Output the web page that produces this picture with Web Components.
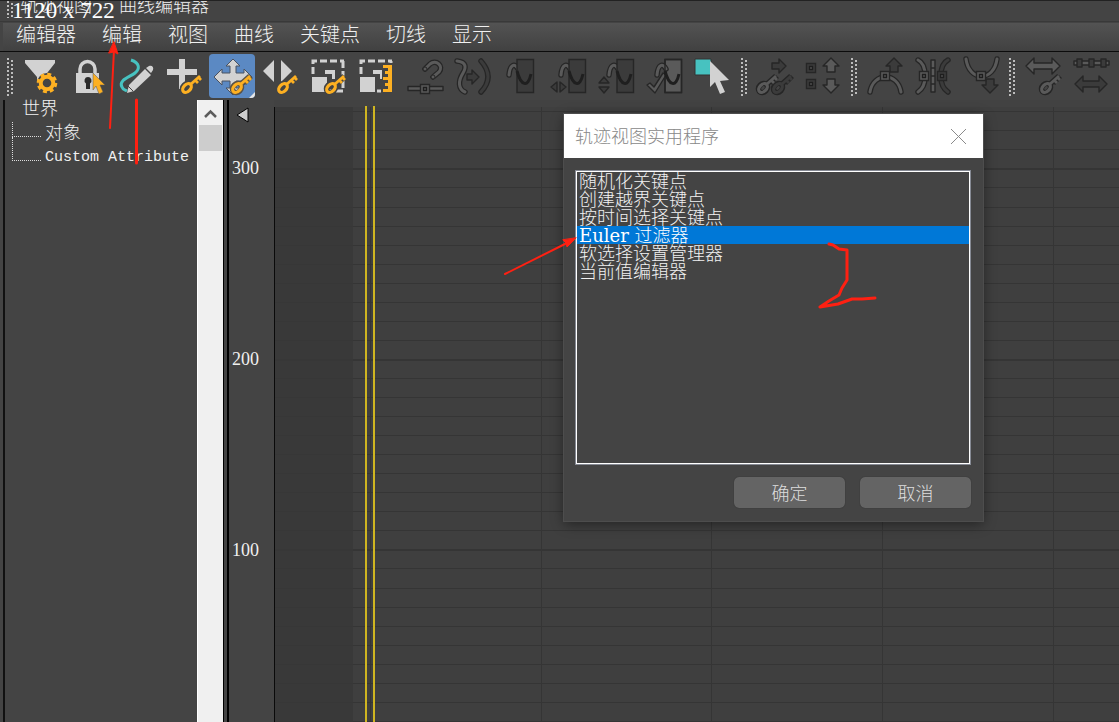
<!DOCTYPE html>
<html lang="zh-CN">
<head>
<meta charset="utf-8">
<title>轨迹视图 - 曲线编辑器</title>
<style>
    html, body {
        margin: 0;
        height: 100%;
        overflow: hidden;
        background: #444;
    }
</style>
</head>
<body>
<curve-editor></curve-editor>

<script>
const FONT = '"Liberation Mono", "Noto Sans CJK SC", monospace';

// Colours shared by the toolbar icons
const LIGHT = '#d2d2d2';
const ORANGE = '#fdb022';
const TEAL = '#47c2c0';
const EDGE = '#262626';
const GREY = '#5a5a5a';
const DARK = '#3b3b3b';

/* ---------- Icon pieces, all in a 48x48 box ---------- */

const key = (x, y, fill, edge) => `
    <g transform="translate(${x} ${y})" fill="none" stroke-linejoin="round">
        <g stroke="${edge}">
            <ellipse rx="5" ry="4" transform="rotate(-45)" stroke-width="5.5"/>
            <path d="M4-4L13-12M8-8l3 3M11-11l3 3" stroke-width="5.5"/>
        </g>
        <g stroke="${fill}">
            <ellipse rx="5" ry="3.5" transform="rotate(-45)" stroke-width="3.2"/>
            <path d="M4-4L13-12M8-8l3 3M11-11l3 3" stroke-width="2.8"/>
        </g>
    </g>`;

const tube = (d, fill = GREY) => `
    <path d="${d}" fill="none" stroke="${EDGE}" stroke-width="5.5" stroke-linecap="round"/>
    <path d="${d}" fill="none" stroke="${fill}" stroke-width="3" stroke-linecap="round"/>`;

const shape = (d, fill = GREY) =>
    `<path d="${d}" fill="${fill}" stroke="${EDGE}" stroke-width="1.4" stroke-linejoin="round"/>`;

const knot = (x, y, fill = GREY) => `
    <path d="M${x - 4.5} ${y - 4.5}h9v9h-9z" fill="${fill}" stroke="${EDGE}" stroke-width="1.4"/>
    <path d="M${x - 1.5} ${y - 1.5}h3v3h-3z" fill="${GREY}" stroke="#1e1e1e" stroke-width="1.4"/>`;

const arrowUp = (x, y, fill) => shape(`M${x} ${y - 7}l8 8h-4v6h-8v-6h-4z`, fill);
const arrowDown = (x, y, fill) => shape(`M${x} ${y + 7}l8-8h-4v-6h-8v6h-4z`, fill);

const wave = (x, fill = DARK) => `
    ${tube(`M${x - 8} 23C${x - 7} 12 ${x - 2} 11 ${x + 1} 17`)}
    <path d="M${x} 7.5h16.5v33H${x}z" fill="${fill}" stroke="${EDGE}" stroke-width="1.4"/>
    <path d="M${x} 19C${x + 4} 34 ${x + 11} 36 ${x + 14} 22" fill="none" stroke="#1f1f1f" stroke-width="3"/>`;

const scaleBox = `
    <g fill="none" stroke="${LIGHT}" stroke-width="3">
        <path d="M8 22V9h31" stroke-dasharray="7 3"/>
        <path d="M38 9v30H24" stroke-dasharray="7 3"/>
    </g>
    <path d="M7 25h15v15H7z" fill="${LIGHT}"/>
    <path d="M20 18h10v9h-3v-5h-7z" fill="${LIGHT}"/>`;

const ICONS = {
    filter: `
        <path d="M8 8h30v3L27 25v7h-7v-7L8 11z" fill="${LIGHT}"/>
        <circle cx="30" cy="31" r="10" fill="#444"/>
        <circle cx="30" cy="31" r="6.3" fill="none" stroke="${ORANGE}" stroke-width="4"/>
        <circle cx="30" cy="31" r="8.8" fill="none" stroke="${ORANGE}" stroke-width="3" stroke-dasharray="3.9 3.01"/>`,
    lock: `
        <path d="M15 22v-5a7.500 7.500 0 0 1 15 0v5" fill="none" stroke="${LIGHT}" stroke-width="3.500"/>
        <path d="M11 21h23v20H11z" fill="${LIGHT}"/>
        <path d="M23 25a3.500 3.500 0 0 1 2 6.400V37h-4v-5.600A3.500 3.500 0 0 1 23 25z" fill="#2b2b2b"/>
        <path d="M28 21l12 12h-5l3 7-4 2-3-8-3 4z" fill="${ORANGE}" stroke="#555" stroke-width=".5"/>`,
    pencil: `
        <path d="M18 8c9 3 9 9 4 13S5 28 9 35c1 3 3 3 5 4" fill="none" stroke="${TEAL}" stroke-width="3"/>
        <path d="M14 41l2-8 16-16 6 6-17 16zM33 16l3-2c3-1 5 1 4 4l-2 3z" fill="${LIGHT}"/>
        <path d="M15 34l5 5" stroke="#444" stroke-width="1"/>`,
    addKey: `
        <path d="M18 7h6v10h12v6H24v14h-6V23H6v-6h12z" fill="${LIGHT}"/>
        ${key(26, 36, ORANGE, '#444')}`,
    move: `
        <path d="M24 7l7 7h-4v7h8v-4l8 8-8 8v-4h-8v7h4l-7 7-7-7h4v-7h-8v4l-8-8 8-8v4h8v-7h-4z" fill="${LIGHT}" stroke="#4a5260" stroke-width="1"/>
        ${key(28, 36, ORANGE, '#5a5348')}
        <path d="M46 40v6h-6z" fill="#e8e8e8"/>`,
    slide: `
        <path d="M6 19L17 8v22zM24 8l11 11-11 11z" fill="${LIGHT}"/>
        ${key(26, 36, ORANGE, '#444')}`,
    scale: scaleBox + key(26, 36, ORANGE, '#444'),
    ruler: scaleBox + `
        <path d="M29 11h12v31H29z" fill="#444"/>
        <path d="M30 13h9v27h-9v-3h5v-3h-3v-3h3v-3h-5v-3h5v-3h-3v-3h3v-3h-5z" fill="${ORANGE}"/>`,
    magnet: `
        ${tube('M24 17l5-5c6-5 14 2 9 8l-6 5')}
        <circle cx="24" cy="17" r="2" fill="${GREY}" stroke="${EDGE}"/>
        <circle cx="32" cy="25" r="2" fill="${GREY}" stroke="${EDGE}"/>
        ${shape('M7 34.500h35v4H7z')}${knot(24, 37)}`,
    offset: `
        ${tube('M8 9c10 1 9 7 6 12-5 8-5 16 2 19')}
        ${tube('M32 9q14 16 0 31', DARK)}
        ${shape('M18 22h5v-4l7 7-7 7v-4h-5z', DARK)}`,
    curve: wave(20),
    curveWide: wave(24) + shape('M6 35l6-5v10zM21 35l-6-5v10z', DARK),
    curveTall: wave(24) + shape('M11 25l5 6H6zM11 41l5-6H6z', DARK),
    curveCheck: shape('M24 7.500h16.500v33H24z') + shape('M6 33l3-2 4 4 9-14 3 2-11 18z') + wave(24, 'none'),
    region: `
        <path d="M6 7h16v16H6z" fill="${TEAL}" stroke="#333"/>
        <path d="M21 9l19 19-9 1 5 11-5 2-5-12-5 5z" fill="${LIGHT}"/>`,
    keysNext: `
        ${shape('M21 11h7V7l7 7-7 7v-4h-7z', DARK)}
        ${key(27, 36, DARK, EDGE)}${key(12, 36, GREY, EDGE)}`,
    stack: `
        ${knot(12, 16, DARK)}${knot(12, 32, DARK)}
        ${arrowUp(32, 13)}${arrowDown(32, 34)}`,
    tangentUp: arrowUp(33, 13, DARK) + tube('M9 40C12 20 37 20 40 40') + knot(24, 24),
    tangentSplit: `
        ${tube('M9 8c8 4 7 13 7 17s-1 11-7 15')}${tube('M39 8c-8 4-7 13-7 17s1 11 7 15', DARK)}
        ${shape('M22 8h4v32h-4zM22 16h4M22 24h4M22 32h4')}
        ${knot(15, 24)}${knot(33, 24, DARK)}`,
    tangentDown: arrowDown(33, 34, DARK) + tube('M9 7C12 30 37 30 40 7') + knot(24, 24),
    spanKey: shape('M7 14l8-8v5h18V6l8 8-8 8v-5H15v5z') + key(27, 36, GREY, EDGE),
    spanRow: `
        ${shape('M7 9h35v4H7z')}
        ${shape('M10 7h5v8h-5zM22 7h5v8h-5zM34 7h5v8h-5z', DARK)}
        ${shape('M8 32l8-8v5h16v-5l8 8-8 8v-5H16v5z', DARK)}`
};

/**
 * Base class: puts styles and markup in an open shadow root
 */
class BaseElement extends HTMLElement {
    connectedCallback() {
        if (this.shadowRoot) return;
        this.attachShadow({ mode: 'open' });
        this._render();
    }

    _fill(style, html) {
        this.shadowRoot.innerHTML = `<style>${style}</style>${html}`;
    }
}

/**
 * Dotted handle of a toolbar
 */
class DragGrip extends BaseElement {
    _render() {
        this._fill(`
            :host {
                display: block;
                flex: none;
                width: 10px;
                padding-left: 4px;
            }
            div {
                width: 6px;
                height: 100%;
                background:
                    repeating-linear-gradient(#bdbdbd 0 2px, transparent 2px 4px) 0 0 / 2px 100% no-repeat,
                    repeating-linear-gradient(transparent 0 2px, #bdbdbd 2px 4px) 4px 0 / 2px 100% no-repeat;
            }
        `, '<div></div>');
    }
}

/**
 * One icon button of the toolbar
 */
class ToolButton extends BaseElement {
    _render() {
        const label = this.getAttribute('label');
        this._fill(`
            :host {
                display: block;
                flex: none;
                width: 48px;
                height: 48px;
            }
            button {
                display: block;
                width: 100%;
                height: 100%;
                margin: 0;
                padding: 0;
                border: 0;
                background: none;
            }
            svg {
                display: block;
            }
            :host([active]) button {
                background: linear-gradient(#5b89c3, #5b89c3) 0 2px / 46px 44px no-repeat;
                clip-path: inset(2px 2px 2px 0 round 4px);
            }
        `, `
            <button type="button" aria-label="${label}" ${this.hasAttribute('off') ? 'disabled' : ''}>
                <svg width="48" height="48" viewBox="0 0 48 48" aria-hidden="true">${ICONS[this.getAttribute('icon')]}</svg>
            </button>
        `);
    }
}

class ToolBar extends BaseElement {
    _render() {
        this._fill(`
            :host {
                display: flex;
                flex: none;
                height: 48px;
                padding-left: 3px;
                overflow: hidden;
                background: #444;
                border-top: 1px solid #0c0c0c;
            }
            drag-grip {
                margin: 6px 0 4px;
            }
        `, `
            <drag-grip></drag-grip>
            <tool-button icon="filter" label="过滤器"></tool-button>
            <tool-button icon="lock" label="锁定当前选择"></tool-button>
            <tool-button icon="pencil" label="绘制曲线"></tool-button>
            <tool-button icon="addKey" label="添加关键点"></tool-button>
            <tool-button icon="move" label="移动关键点" active></tool-button>
            <tool-button icon="slide" label="滑动关键点"></tool-button>
            <tool-button icon="scale" label="缩放关键点"></tool-button>
            <tool-button icon="ruler" label="缩放值"></tool-button>
            <tool-button icon="magnet" label="捕捉缩放" off></tool-button>
            <tool-button icon="offset" label="参数曲线超出范围类型" off></tool-button>
            <tool-button icon="curve" label="减少关键点" off></tool-button>
            <tool-button icon="curveWide" label="水平缩放" off></tool-button>
            <tool-button icon="curveTall" label="垂直缩放" off></tool-button>
            <tool-button icon="curveCheck" label="应用曲线" off></tool-button>
            <tool-button icon="region" label="区域工具"></tool-button>
            <drag-grip></drag-grip>
            <tool-button icon="keysNext" label="下一组关键点" off></tool-button>
            <tool-button icon="stack" label="增加选择" off></tool-button>
            <drag-grip></drag-grip>
            <tool-button icon="tangentUp" label="放长切线" off></tool-button>
            <tool-button icon="tangentSplit" label="镜像切线" off></tool-button>
            <tool-button icon="tangentDown" label="缩短切线" off></tool-button>
            <drag-grip></drag-grip>
            <tool-button icon="spanKey" label="框显关键点" off></tool-button>
            <tool-button icon="spanRow" label="框显范围" off></tool-button>
        `);
    }
}

class TitleBar extends BaseElement {
    _render() {
        this._fill(`
            :host {
                display: flex;
                flex: none;
                height: 20px;
                padding-left: 3px;
                overflow: hidden;
                position: relative;
                border-top: 1px solid #222;
                border-bottom: 1px solid #393939;
                line-height: 18px;
            }
            drag-grip {
                margin-bottom: 3px;
            }
            .title {
                margin: -3px 0 0 3px;
                font-size: 18px;
                white-space: pre;
            }
            .latin {
                font-size: 15px;
            }
            /* size readout that floats over the title */
            .size {
                position: absolute;
                left: 12px;
                top: 0;
                font: 23px/20px "Liberation Serif", serif;
                color: #fff;
                white-space: pre;
            }
        `, `
            <drag-grip></drag-grip>
            <div class="title">轨迹视图<span class="latin"> - </span>曲线编辑器</div>
            <div class="size">1120 x 722</div>
        `);
    }
}

class MenuBar extends BaseElement {
    _render() {
        const items = ['编辑器', '编辑', '视图', '曲线', '关键点', '切线', '显示'];
        this._fill(`
            :host {
                display: block;
                flex: none;
                margin: 1px 0 0 3px;
                background: linear-gradient(#535353, #414141);
            }
            nav {
                display: flex;
                gap: 26px;
                height: 28px;
                padding: 0 13px;
            }
            button {
                margin: 0;
                padding: 0;
                border: 0;
                background: none;
                color: inherit;
                font: inherit;
                font-size: 20px;
                line-height: 26px;
            }
        `, `<nav>${items.map(text => `<button type="button">${text}</button>`).join('')}</nav>`);
    }
}

/**
 * Left panel with the controller tree and its scroll bar
 */
class ControllerTree extends BaseElement {
    _render() {
        this._fill(`
            :host {
                display: flex;
                flex: none;
                width: 218px;
                margin-left: 3px;
                border-left: 2px solid #111;
                border-right: 1px solid #000;
            }
            .tree {
                flex: 1;
                font-size: 18px;
                line-height: 24px;
            }
            ul {
                margin: 0;
                padding: 0;
                list-style: none;
            }
            .root {
                margin-top: -2px;
                padding-left: 17px;
            }
            .root ul {
                margin-left: -10px;
            }
            .root ul li {
                display: flex;
                height: 24px;
            }
            /* dotted branch line in front of each child */
            .root ul li::before {
                content: "";
                box-sizing: border-box;
                width: 29px;
                height: 15px;
                margin-right: 4px;
                border-left: 1px dotted #ddd;
                border-bottom: 1px dotted #ddd;
            }
            .root ul li + li::before {
                height: 24px;
                margin-top: -9px;
            }
            .latin {
                font-size: 15px;
            }
            .scroll {
                display: flex;
                flex-direction: column;
                box-sizing: border-box;
                width: 26px;
                padding: 0 1px;
                background: #f0f0f0;
                border-left: 1px solid #fff;
            }
            .scroll svg {
                display: block;
                height: 25px;
            }
            .thumb {
                height: 26px;
                background: #cdcdcd;
            }
        `, `
            <div class="tree">
                <ul class="root">
                    <li>世界
                        <ul>
                            <li>对象</li>
                            <li class="latin">Custom Attribute</li>
                        </ul>
                    </li>
                </ul>
            </div>
            <div class="scroll">
                <svg width="23" height="25" viewBox="0 0 23 25" aria-hidden="true"><path d="M6 17l5.500-5.500L17 17" fill="none" stroke="#5c5c5c" stroke-width="2.500"/></svg>
                <div class="thumb"></div>
            </div>
        `);
    }
}

/**
 * Value axis and the key grid
 */
class CurveGraph extends BaseElement {
    _render() {
        let lines = '';
        // value lines, every tenth one is thick
        for (let i = -3; i < 60; i++) {
            const y = Math.round(68.4 + i * 19.05);
            lines += `<rect x="1" y="${y}" width="100%" height="${i % 10 === 0 ? 2 : 1}"/>`;
        }
        // time lines
        for (let i = 0; i < 12; i++) {
            lines += `<rect x="${Math.round(96 + i * 170.7)}" y="7" width="1" height="100%"/>`;
        }

        this._fill(`
            :host {
                display: flex;
                flex: 1;
                min-width: 0;
                margin-left: 3px;
                border-left: 2px solid #000;
                background: #3f3f3f;
            }
            .axis {
                display: flex;
                flex-direction: column;
                flex: none;
                gap: 173px;
                box-sizing: border-box;
                width: 45px;
                padding-left: 3px;
                background: #444;
                font: 18px/18px "Liberation Serif", serif;
            }
            .axis svg {
                display: block;
                height: 30px;
                margin-bottom: -144px;
            }
            .plot {
                flex: 1;
                width: 0;
                height: 100%;
                shape-rendering: crispEdges;
            }
        `, `
            <div class="axis">
                <svg width="24" height="30" viewBox="0 0 24 30" aria-hidden="true"><path d="M5 15l11-7v14z" fill="#ccc" stroke="#000"/></svg>
                <span>300</span>
                <span>200</span>
                <span>100</span>
            </div>
            <svg class="plot" aria-hidden="true">
                <rect width="100%" height="7" fill="#424242"/>
                <g fill="#353535">${lines}</g>
                <rect x="1" y="7" width="78" height="100%" fill="#383838" fill-opacity=".8"/>
                <rect x="0" y="7" width="1" height="100%" fill="#0a0a0a"/>
                <rect x="91" y="6" width="2" height="100%" fill="#cfb521"/>
                <rect x="99" y="6" width="2" height="100%" fill="#cfb521"/>
            </svg>
        `);
    }
}

/**
 * Dialog with the list of track view utilities
 */
class UtilityDialog extends BaseElement {
    _render() {
        const items = ['随机化关键点', '创建越界关键点', '按时间选择关键点', 'Euler 过滤器', '软选择设置管理器', '当前值编辑器'];
        this._fill(`
            :host {
                display: block;
                width: 419px;
                background: #444;
                outline: 1px solid #4d4d4d;
                box-shadow: 0 3px 12px rgba(0, 0, 0, 0.45);
                font-size: 18px;
            }
            header {
                display: flex;
                align-items: center;
                justify-content: space-between;
                height: 44px;
                padding: 0 16px 0 11px;
                background: #fff;
                color: #888;
            }
            h1 {
                margin: 0;
                padding-bottom: 2px;
                font-size: 18px;
                font-weight: inherit;
            }
            button {
                margin: 0;
                padding: 0;
                border: 0;
                background: none;
                font: inherit;
            }
            header svg {
                display: block;
            }
            form {
                padding: 12px 12px 13px 11px;
            }
            select {
                appearance: none;
                display: block;
                box-sizing: border-box;
                width: 100%;
                height: 295px;
                margin: 0;
                padding: 0;
                overflow: hidden;
                border: 1px solid #868a94;
                border-radius: 0;
                outline: 1px solid #fff;
                outline-offset: -2px;
                background: #444;
                color: #f2f2f2;
                font: inherit;
                font-family: "DejaVu Serif", "Noto Sans CJK SC", serif;
            }
            option {
                display: flex;
                align-items: center;
                height: 18px;
                min-height: 18px;
                margin: 0 1px;
                padding: 0 2px 2px;
                box-sizing: border-box;
                font-weight: 300;
            }
            option:first-child {
                margin-top: 1px;
            }
            option:checked {
                background: linear-gradient(#0078d7, #0078d7);
                color: #fff;
            }
            .actions {
                display: flex;
                justify-content: flex-end;
                gap: 15px;
                margin-top: 12px;
            }
            .actions button {
                width: 111px;
                height: 31px;
                padding-bottom: 2px;
                border-radius: 5px;
                background: #646464;
                color: #dedede;
                outline: 1px solid #404040;
            }
        `, `
            <header>
                <h1>轨迹视图实用程序</h1>
                <button type="button" aria-label="关闭">
                    <svg width="17" height="17" viewBox="0 0 17 17"><path d="M1 1l15 15M16 1L1 16" stroke="#8a8a8a"/></svg>
                </button>
            </header>
            <form>
                <select size="16" aria-label="轨迹视图实用程序">
                    ${items.map((text, i) => `<option${i === 3 ? ' selected' : ''}>${text}</option>`).join('')}
                </select>
                <div class="actions">
                    <button type="button">确定</button>
                    <button type="button">取消</button>
                </div>
            </form>
        `);
    }
}

/**
 * Red hand-drawn marks over the window
 */
class RedMarks extends BaseElement {
    _render() {
        this._fill(`
            :host {
                display: block;
                pointer-events: none;
            }
            svg {
                display: block;
                width: 100%;
                height: 100%;
            }
        `, `
            <svg fill="none" stroke="#ff2012" stroke-width="2" stroke-linecap="round" stroke-linejoin="round" aria-hidden="true">
                <path d="M110 128L114 50"/>
                <path d="M114 42l4 12-4-2-5 1z" fill="#ff2012" stroke-width="1"/>
                <path d="M136.500 100v63" stroke-width="3"/>
                <path d="M505 274l64-32"/>
                <path d="M576 238l-9 9-1-4-3-3z" fill="#ff2012" stroke-width="1"/>
                <path d="M829 244l4 1 6 4 8 1v30l-5 8-3 7-10 6-9 6 18-3 14-5h10l13-1" stroke-width="3"/>
            </svg>
        `);
    }
}

class CurveEditor extends BaseElement {
    _render() {
        this._fill(`
            :host {
                display: flex;
                flex-direction: column;
                position: relative;
                height: 100vh;
                overflow: hidden;
                background: #444;
                color: #f0f0f0;
                font-family: ${FONT};
                font-weight: 300;
            }
            main {
                display: flex;
                flex: 1;
                min-height: 0;
            }
            utility-dialog {
                position: absolute;
                left: 564px;
                top: 114px;
            }
            red-marks {
                position: absolute;
                inset: 0;
            }
        `, `
            <title-bar></title-bar>
            <menu-bar></menu-bar>
            <tool-bar></tool-bar>
            <main>
                <controller-tree></controller-tree>
                <curve-graph></curve-graph>
            </main>
            <utility-dialog></utility-dialog>
            <red-marks></red-marks>
        `);
    }
}

customElements.define('drag-grip', DragGrip);
customElements.define('tool-button', ToolButton);
customElements.define('tool-bar', ToolBar);
customElements.define('title-bar', TitleBar);
customElements.define('menu-bar', MenuBar);
customElements.define('controller-tree', ControllerTree);
customElements.define('curve-graph', CurveGraph);
customElements.define('utility-dialog', UtilityDialog);
customElements.define('red-marks', RedMarks);
customElements.define('curve-editor', CurveEditor);
</script>
</body>
</html>
